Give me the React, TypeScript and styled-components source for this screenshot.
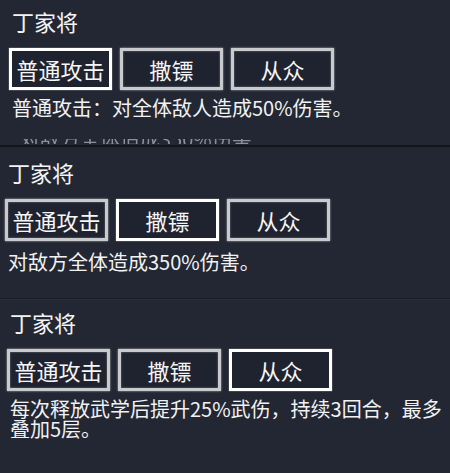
import React from 'react';
import styled, { createGlobalStyle } from 'styled-components';

const GlobalStyle = createGlobalStyle`
    html, body {
        margin: 0;
        padding: 0;
        background: #232734;
    }
    body {
        font-family: "Noto Sans CJK SC", "Noto Sans", sans-serif;
        color: #f2f2f2;
    }
`;

type SkillPanel = {
    selected: number;
    text: string;
    padTop: number;
    padLeft: number;
    textGap: number;
};

const SKILLS = ['普通攻击', '撒镖', '从众'];

const PANELS: SkillPanel[] = [
    { selected: 0, text: '普通攻击：对全体敌人造成50%伤害。', padTop: 8, padLeft: 9, textGap: 6 },
    { selected: 1, text: '对敌方全体造成350%伤害。', padTop: 12, padLeft: 5, textGap: 9 },
    { selected: 2, text: '每次释放武学后提升25%武伤，持续3回合，最多叠加5层。', padTop: 10, padLeft: 7, textGap: 8 },
];

export default function App(): JSX.Element {
    return (
        <Page>
            <GlobalStyle />
            {PANELS.map((panel, i) => (
                <Panel key={i} $padTop={panel.padTop} $padLeft={panel.padLeft} $index={i}>
                    <HeroName>丁家将</HeroName>
                    <SkillRow>
                        {SKILLS.map((name, j) => (
                            <SkillButton key={name} $active={panel.selected === j}>
                                {name}
                            </SkillButton>
                        ))}
                    </SkillRow>
                    <SkillText $gap={panel.textGap} $tight={i === 2}>
                        {panel.text}
                    </SkillText>
                    {i === 0 && (
                        <GhostStrip>
                            <GhostText>对敌方全体造成350%伤害</GhostText>
                        </GhostStrip>
                    )}
                </Panel>
            ))}
        </Page>
    );
}

const Page = styled.div`
    width: 450px;
    height: 473px;
    overflow: hidden;
    background: #232734;
`;

const Panel = styled.section<{ $padTop: number; $padLeft: number; $index: number }>`
    box-sizing: border-box;
    padding: ${p => p.$padTop}px 0 0 ${p => p.$padLeft}px;
    height: ${p => (p.$index === 0 ? 147 : p.$index === 1 ? 151 : 175)}px;
    border-bottom: ${p => (p.$index === 0 ? '2px solid #14161b' : 'none')};
    border-top: ${p => (p.$index === 2 ? '1px solid #191c24' : 'none')};
    box-shadow: ${p => (p.$index === 2 ? 'inset 0 1px 0 #2a2e3a' : 'none')};
`;

const HeroName = styled.h2`
    margin: 0 0 0 3px;
    font-size: 22px;
    line-height: 26px;
    font-weight: 400;
    color: #f4f4f4;
`;

const SkillRow = styled.div`
    display: flex;
    gap: 8px;
    margin-top: 14px;
`;

const SkillButton = styled.div<{ $active: boolean }>`
    box-sizing: border-box;
    width: 103px;
    height: 42px;
    display: flex;
    align-items: center;
    justify-content: center;
    font-size: 22px;
    color: #f6f6f6;
    background: #1f2330;
    border: 3px solid ${p => (p.$active ? '#ffffff' : '#c9cacd')};
    box-shadow: ${p =>
        p.$active
            ? '0 0 1px rgba(255,255,255,0.8)'
            : '0 0 2px rgba(230,230,230,0.7), inset 0 0 2px rgba(230,230,230,0.5)'};
`;

const SkillText = styled.p<{ $gap: number; $tight: boolean }>`
    margin: ${p => p.$gap}px 0 0 3px;
    font-size: 20px;
    line-height: ${p => (p.$tight ? 20 : 24)}px;
    color: #f2f2f2;
`;

const GhostStrip = styled.div`
    height: 5px;
    margin: 19px 0 0 11px;
    overflow: hidden;
`;

const GhostText = styled.div`
    margin-top: -12px;
    font-size: 20px;
    line-height: 24px;
    white-space: nowrap;
    color: #8e9098;
    filter: blur(0.4px);
`;
